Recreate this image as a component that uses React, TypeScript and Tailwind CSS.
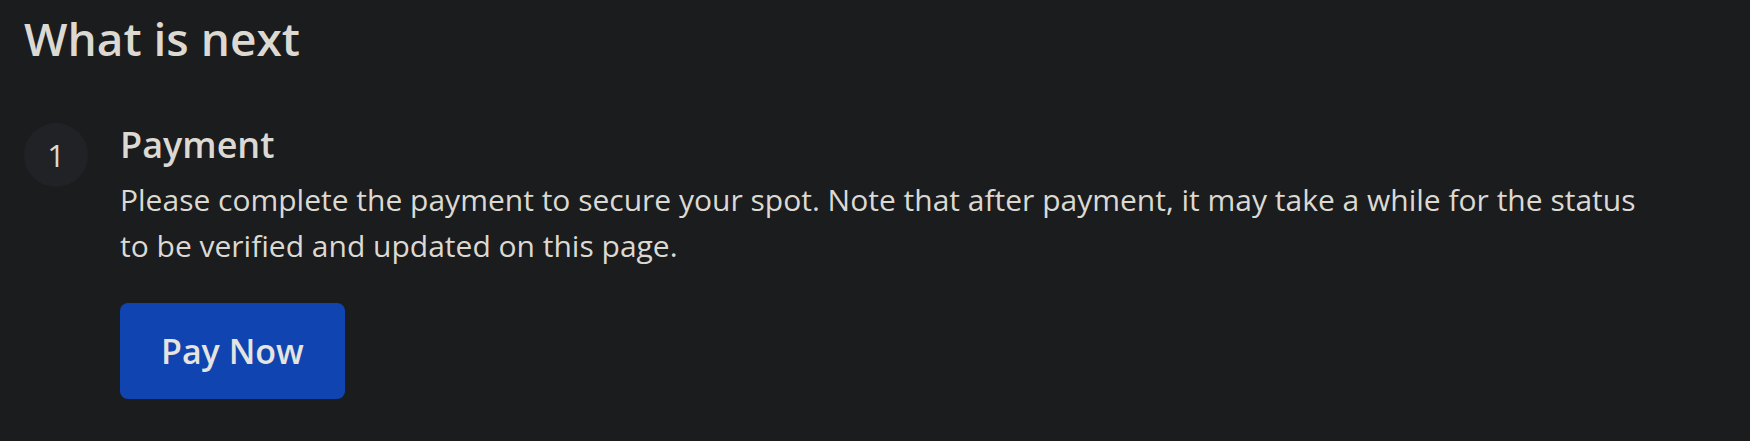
export default function App() {
  return (
    <div className="min-h-screen w-full bg-[#1b1c1e] px-6 pt-[11px] text-[#dcd9d3] font-['Open_Sans',sans-serif]">
      <h1 className="text-[46px] font-semibold leading-[1.2]">What is next</h1>
      <div className="mt-[57px] flex gap-[32px]">
        <div className="flex h-16 w-16 shrink-0 items-center justify-center rounded-full bg-[#212225] text-[31px] leading-none">
          1
        </div>
        <div className="max-w-[1535px]">
          <h2 className="text-[36px] font-semibold leading-[1.2]">Payment</h2>
          <p className="mt-[11px] text-[30px] leading-[46px]">
            Please complete the payment to secure your spot. Note that after payment, it may take a while for the status
            to be verified and updated on this page.
          </p>
          <button className="mt-[34px] flex h-[96px] items-center rounded-lg bg-[#1044b0] px-[41px] text-[34px] font-semibold text-[#e6e4e0]">
            Pay Now
          </button>
        </div>
      </div>
    </div>
  );
}
